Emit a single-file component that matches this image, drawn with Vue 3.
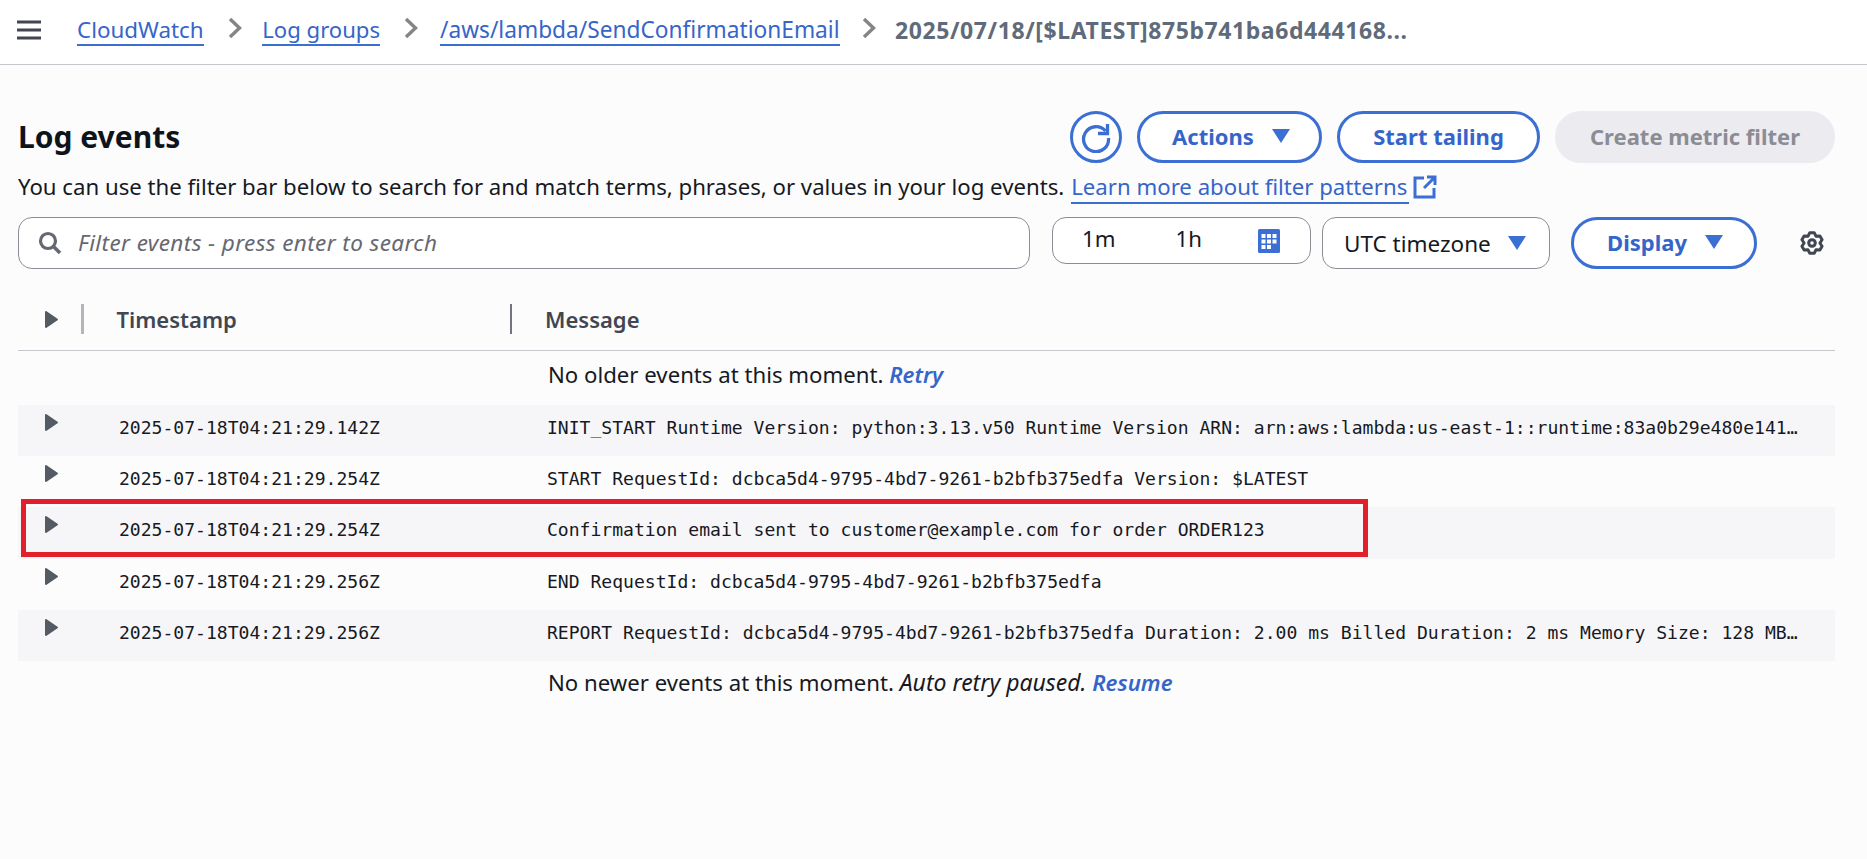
<script setup>
const rows = [
  { t: '2025-07-18T04:21:29.142Z', m: 'INIT_START Runtime Version: python:3.13.v50 Runtime Version ARN: arn:aws:lambda:us-east-1::runtime:83a0b29e480e141…', s: true },
  { t: '2025-07-18T04:21:29.254Z', m: 'START RequestId: dcbca5d4-9795-4bd7-9261-b2bfb375edfa Version: $LATEST', s: false },
  { t: '2025-07-18T04:21:29.254Z', m: 'Confirmation email sent to customer@example.com for order ORDER123', s: true },
  { t: '2025-07-18T04:21:29.256Z', m: 'END RequestId: dcbca5d4-9795-4bd7-9261-b2bfb375edfa', s: false },
  { t: '2025-07-18T04:21:29.256Z', m: 'REPORT RequestId: dcbca5d4-9795-4bd7-9261-b2bfb375edfa Duration: 2.00 ms Billed Duration: 2 ms Memory Size: 128 MB…', s: true }
]

const gearPath = (() => {
  const pts = []
  for (let i = 0; i < 6; i++) {
    const a = -90 + i * 60
    for (const [r, d] of [[7.9, -30], [10.6, -12], [10.6, 12]]) {
      const t = ((a + d) * Math.PI) / 180
      pts.push((13 + r * Math.cos(t)).toFixed(2) + ' ' + (13 + r * Math.sin(t)).toFixed(2))
    }
  }
  return 'M' + pts.join('L') + 'Z'
})()
</script>

<template>
  <div class="page">
    <header class="top">
      <svg class="burger" width="24" height="20" viewBox="0 0 24 20"><path d="M0 2h24M0 10h24M0 18h24" stroke="#424650" stroke-width="3"/></svg>
      <nav class="crumbs">
        <a class="crumb first">CloudWatch</a>
        <svg class="chev c1" width="14" height="22" viewBox="0 0 14 22"><path d="M2 2l9.500 9-9.500 9" fill="none" stroke="#858585" stroke-width="3.400"/></svg>
        <a class="crumb">Log groups</a>
        <svg class="chev" width="14" height="22" viewBox="0 0 14 22"><path d="M2 2l9.500 9-9.500 9" fill="none" stroke="#858585" stroke-width="3.400"/></svg>
        <a class="crumb wide">/aws/lambda/SendConfirmationEmail</a>
        <svg class="chev c3" width="14" height="22" viewBox="0 0 14 22"><path d="M2 2l9.500 9-9.500 9" fill="none" stroke="#858585" stroke-width="3.400"/></svg>
        <span class="current">2025/07/18/[$LATEST]875b741ba6d444168...</span>
      </nav>
    </header>

    <main class="main">
      <div class="title-row">
        <h1>Log events</h1>
        <div class="actions">
          <button class="btn round">
            <svg width="32" height="32" viewBox="0 0 32 32"><path d="M25.500 10A12.500 12.500 0 1 0 28.500 17" fill="none" stroke="#3b6fd4" stroke-width="3.300"/><path d="M27.500 3v9.500H18" fill="none" stroke="#3b6fd4" stroke-width="3.300"/></svg>
          </button>
          <button class="btn act">Actions<span class="caret"></span></button>
          <button class="btn tail">Start tailing</button>
          <button class="btn off">Create metric filter</button>
        </div>
      </div>
      <p class="desc">You can use the filter bar below to search for and match terms, phrases, or values in your log events.<a class="learn">Learn more about filter patterns</a><svg class="ext" width="24" height="24" viewBox="0 0 24 24"><path d="M11 3H2v19h19v-9" fill="none" stroke="#3b6fd4" stroke-width="3"/><path d="M14 2h8v8M22 2L11 13" fill="none" stroke="#3b6fd4" stroke-width="3"/></svg></p>

      <div class="filters">
        <div class="search">
          <svg width="24" height="24" viewBox="0 0 24 24"><circle cx="10" cy="10" r="7.500" fill="none" stroke="#656871" stroke-width="3.200"/><path d="M15.500 15.500L22 22" stroke="#656871" stroke-width="3.600"/></svg>
          <span class="ph">Filter events - press enter to search</span>
        </div>
        <div class="range">
          <span class="r1">1m</span><span class="r2">1h</span>
          <svg width="22" height="24" viewBox="0 0 22 24"><rect x="0" y="0" width="22" height="24" rx="1.500" fill="#3b6fd4"/><g fill="#fff"><rect x="3.500" y="5" width="4" height="4"/><rect x="9" y="5" width="4" height="4"/><rect x="14.500" y="5" width="4" height="4"/><rect x="3.500" y="10.500" width="4" height="4"/><rect x="9" y="10.500" width="4" height="4"/><rect x="14.500" y="10.500" width="4" height="4"/><rect x="3.500" y="16" width="4" height="4"/><rect x="9" y="16" width="4" height="4"/></g></svg>
        </div>
        <div class="tz">UTC timezone<span class="caret"></span></div>
        <button class="btn disp">Display<span class="caret"></span></button>
        <svg class="gear" width="26" height="26" viewBox="0 0 26 26"><path fill="none" stroke="#424650" stroke-width="3" stroke-linejoin="round" :d="gearPath"/><circle cx="13" cy="13" r="3.300" fill="none" stroke="#424650" stroke-width="3"/></svg>
      </div>

      <div class="thead">
        <div class="c-arrow"><svg class="tri" width="15" height="19" viewBox="0 0 15 19"><path d="M2 2l11 7.500L2 17z" fill="#545b64" stroke="#545b64" stroke-width="2" stroke-linejoin="round"/></svg></div>
        <i class="sep light"></i>
        <div class="c-time">Timestamp</div>
        <i class="sep dark"></i>
        <div class="c-msg">Message</div>
      </div>

      <div class="note top-note"><span>No older events at this moment. <em class="lnk">Retry</em></span></div>

      <div class="rows">
        <div v-for="(r, i) in rows" :key="i" class="row" :class="{ striped: r.s }">
          <div class="r-arrow"><svg class="tri" width="15" height="19" viewBox="0 0 15 19"><path d="M2 2l11 7.500L2 17z" fill="#545b64" stroke="#545b64" stroke-width="2" stroke-linejoin="round"/></svg></div>
          <div class="r-time">{{ r.t }}</div>
          <div class="r-msg">{{ r.m }}</div>
        </div>
        <div class="mark"></div>
      </div>

      <div class="note bottom-note"><span>No newer events at this moment. <em class="auto">Auto retry paused.</em> <em class="lnk">Resume</em></span></div>
    </main>
  </div>
</template>

<style>
html, body { margin: 0; background: #fcfcfd; }
</style>

<style scoped>
.page { font-family: "Noto Sans", sans-serif; font-size: 22.200px; color: #16191f; width: 1867px; height: 859px; overflow: hidden; background: #fcfcfd; }
.top { height: 64px; background: #fff; border-bottom: 1px solid #c6c6cd; display: flex; align-items: center; padding-left: 17px; }
.burger { margin-right: 36px; margin-top: -4px; }
.crumbs { display: flex; align-items: center; margin-top: -4px; }
.crumb { color: #3665c9; font-size: 22.100px; border-bottom: 2.500px solid #3b6fd4; line-height: 29px; }
.crumb.first { font-size: 22.400px; }
.crumb.wide { font-size: 22.700px; }
.chev { margin: -4px 22px 0 24px; }
.chev.c1 { margin-right: 20.600px; }
.chev.c3 { margin-left: 22px; margin-right: 19.500px; }
.current { font-weight: 700; color: #5f6b7a; font-size: 23px; letter-spacing: 0.580px; }
.main { padding: 46px 32px 0 18px; }
.title-row { display: flex; justify-content: space-between; align-items: center; height: 52px; }
h1 { margin: -2px 0 0; font-size: 30px; font-weight: 700; color: #0f141a; }
.actions { display: flex; gap: 15px; }
.btn { font-family: inherit; font-size: 22px; font-weight: 700; color: #3665c9; background: #fff; border: 3px solid #3b6fd4; border-radius: 26px; height: 52px; box-sizing: border-box; display: inline-flex; align-items: center; justify-content: center; padding: 0 0 2px; }
.round { width: 52px; border-radius: 50%; padding: 0; }
.act { width: 185px; padding-left: 3px; }
.tail { width: 203px; }
.off { width: 280px; background: #ebebf0; border-color: #ebebf0; color: #8c8c94; }
.caret { display: inline-block; width: 0; height: 0; border-left: 9.500px solid transparent; border-right: 9.500px solid transparent; border-top: 14px solid #3b6fd4; margin-left: 18px; }
.desc { margin: 9px 0 0; line-height: 30px; height: 30px; white-space: nowrap; display: flex; align-items: center; }
.learn { color: #3665c9; border-bottom: 2.500px solid #3b6fd4; margin-left: 7px; padding-right: 2px; line-height: 31px; }
.ext { margin-left: 4px; }
.filters { margin-top: 15px; display: flex; align-items: flex-start; }
.search { width: 1012px; height: 52px; box-sizing: border-box; border: 1px solid #8c8c94; border-radius: 14px; background: #fff; display: flex; align-items: center; padding-left: 19px; color: #656871; font-style: italic; gap: 16px; font-size: 22.500px; letter-spacing: 0.400px; }
.ph { margin-bottom: 2px; }
.range { margin-left: 22px; width: 259px; height: 47px; box-sizing: border-box; border: 1px solid #8c8c94; border-radius: 14px; background: #fff; display: flex; align-items: center; }
.range span { margin-bottom: 4px; }
.r1 { margin-left: 29px; }
.r2 { margin-left: 60px; }
.range svg { margin-left: 56px; }
.tz { margin-left: 11px; width: 228px; height: 52px; box-sizing: border-box; border: 1px solid #8c8c94; border-radius: 14px; background: #fff; display: flex; align-items: center; padding-left: 21px; font-size: 22.500px; }
.tz .caret { margin-left: 17px; }
.disp { margin-left: 21px; width: 186px; padding-left: 2px; }
.gear { margin: 13px 0 0 42px; }
.thead { margin-top: 12px; height: 70px; box-sizing: border-box; padding-top: 7px; border-bottom: 1px solid #c6c6cd; display: flex; align-items: center; font-weight: 600; color: #424650; font-size: 22px; }
.c-arrow { width: 63px; display: flex; padding-left: 26px; box-sizing: border-box; }
.tri { display: block; }
.sep { width: 2.500px; height: 30px; display: block; flex: none; }
.sep.light { background: #b4b4bb; }
.sep.dark { background: #72747e; }
.c-time { width: 393px; padding-left: 33px; }
.c-msg { padding-left: 33px; }
.note { padding-left: 530px; display: flex; align-items: center; white-space: pre; box-sizing: border-box; }
.top-note { height: 54px; padding-bottom: 8px; }
.bottom-note { height: 42px; }
.auto { font-size: 23px; }
.lnk { color: #3665c9; font-weight: 600; }
.rows { position: relative; }
.row { height: 51.200px; display: flex; font-family: "DejaVu Sans Mono", monospace; font-size: 18.070px; white-space: nowrap; }
.striped { background: #f6f6f9; }
.r-arrow { width: 101px; box-sizing: border-box; padding: 8px 0 0 26px; }
.r-time { width: 428px; padding-top: 11px; line-height: 24px; }
.r-msg { padding-top: 11px; line-height: 24px; }
.mark { position: absolute; left: 3px; top: 94px; width: 1347px; height: 58px; box-sizing: border-box; border: 5px solid #e2202c; }
</style>
